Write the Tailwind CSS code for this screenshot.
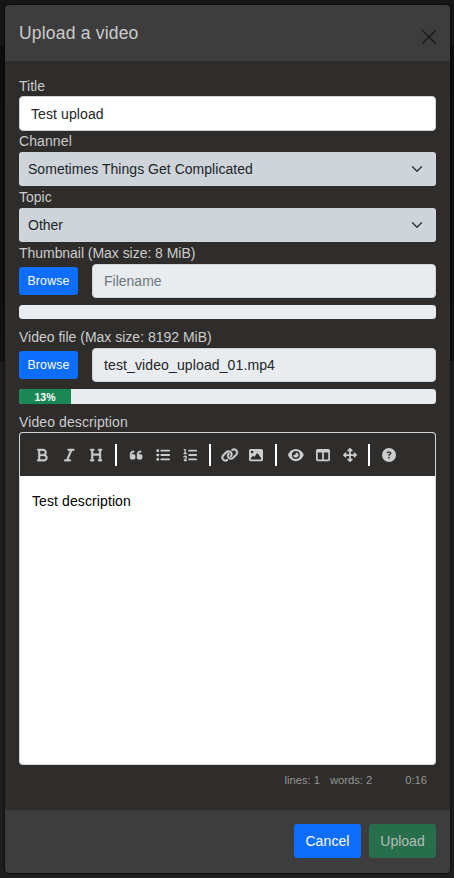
<!DOCTYPE html>
<html lang="en">
<head>
<meta charset="utf-8">
<title>Upload a video</title>
<script src="https://cdn.jsdelivr.net/npm/@tailwindcss/browser@4"></script>
</head>
<body class="h-[878px] w-[454px] overflow-hidden bg-[linear-gradient(#181617_0_46px,#0d0d0d_46px,#111111_361px,#1e1e1e_361px)] p-[5px] pr-1 font-['Liberation_Sans',Arial,sans-serif] text-sm leading-[21px] text-[#cccccc]">
<div class="flex h-[868px] flex-col overflow-hidden rounded-[4px] bg-[#3d3d3d] shadow-[0_0_3px_#000]">
  <header class="flex h-14 shrink-0 items-start justify-between pl-3.5 pr-[13px]">
    <h1 class="pt-[15px] text-[17.5px] leading-[26px] tracking-[0.2px]">Upload a video</h1>
    <svg class="mt-6 size-[16px]" viewBox="0 0 16 16" fill="none" stroke="#1c1c1c" stroke-width="1.5" stroke-linecap="round"><path d="M1.500 1.500 14.500 14.500M14.500 1.500 1.500 14.500"/></svg>
  </header>

  <main class="h-[749px] shrink-0 rounded-b-[3px] bg-[#2e2d2b] px-3.5 pt-3.5">
    <div class="h-14">
      <label class="block h-[21px] leading-[23px]">Title</label>
      <div class="h-[35px] rounded-[4px] border border-[#ced4da] bg-white px-[11px] py-[7px] leading-5 tracking-[0.1px] text-[#212529]">Test upload</div>
    </div>
    <div class="h-14">
      <label class="block h-[21px] tracking-[0.1px]">Channel</label>
      <div class="flex h-[34px] items-center justify-between rounded-[3px] bg-[#ced4da] pl-[9px] pr-[13px] tracking-[0.03px] text-[#212529]">Sometimes Things Get Complicated
        <svg class="size-3" viewBox="0 0 16 16" fill="none" stroke="#343a40" stroke-width="2" stroke-linecap="round" stroke-linejoin="round"><path d="m2 5 6 6 6-6"/></svg>
      </div>
    </div>
    <div class="h-14">
      <label class="block h-[21px]">Topic</label>
      <div class="flex h-[34px] items-center justify-between rounded-[3px] bg-[#ced4da] pl-[9px] pr-[13px] text-[#212529]">Other
        <svg class="size-3" viewBox="0 0 16 16" fill="none" stroke="#343a40" stroke-width="2" stroke-linecap="round" stroke-linejoin="round"><path d="m2 5 6 6 6-6"/></svg>
      </div>
    </div>
    <div class="h-21">
      <label class="block h-[21px] tracking-[-0.04px]">Thumbnail (Max size: 8 MiB)</label>
      <div class="flex h-[34px] items-center gap-3.5">
        <div class="h-7 w-[59px] rounded-[3px] bg-[#0d6efd] text-center text-[12.25px] leading-[28px] tracking-[0.2px] text-white">Browse</div>
        <div class="h-[34px] flex-1 rounded-[4px] border border-[#ced4da] bg-[#e9ecef] px-[11px] py-1.5 text-[#6c757d]">Filename</div>
      </div>
      <div class="mt-[7px] h-3.5 rounded-[3.500px] bg-[#e9ecef]"></div>
    </div>
    <div class="h-[85px]">
      <label class="block h-[21px]">Video file (Max size: 8192 MiB)</label>
      <div class="flex h-[34px] items-center gap-3.5">
        <div class="h-7 w-[59px] rounded-[3px] bg-[#0d6efd] text-center text-[12.25px] leading-[28px] tracking-[0.2px] text-white">Browse</div>
        <div class="h-[34px] flex-1 rounded-[4px] border border-[#ced4da] bg-[#e9ecef] px-[11px] py-1.5 tracking-[0.12px] text-[#212529]">test_video_upload_01.mp4</div>
      </div>
      <div class="mt-[7px] flex h-[15px] overflow-hidden rounded-[3.500px] bg-[#e9ecef]">
        <div class="w-[52px] bg-[#198754] text-center text-[10.5px] font-bold leading-[17px] text-white">13%</div>
      </div>
    </div>
    <label class="block h-5 tracking-[0.1px]">Video description</label>
    <div class="h-[333px] overflow-hidden rounded-[4px] border border-[#ced4da] border-b-[#d8dcdc] bg-white">
      <div class="flex h-[43px] items-center pl-[9px] pt-[1px] bg-[#2e2d2b] text-[#cccccc]">
        <span class="flex w-[27px] justify-center"><svg class="h-3.5 w-[10.5px] overflow-visible" viewBox="0 0 384 512" fill="currentColor" stroke="currentColor" stroke-width="14"><path d="M0 64C0 46.300 14.300 32 32 32H224c70.700 0 128 57.300 128 128c0 31.300-11.300 60.100-30 82.300c37.100 22.400 62 63.100 62 109.700c0 70.700-57.300 128-128 128H32c-17.700 0-32-14.300-32-32s14.300-32 32-32H48V96H32C14.300 96 0 81.700 0 64zM224 224c35.300 0 64-28.700 64-64s-28.700-64-64-64H112V224H224zM112 288V416H256c35.300 0 64-28.700 64-64s-28.700-64-64-64H112z"/></svg></span>
        <span class="flex w-[27px] justify-center"><svg class="h-3.5 w-[10.5px] overflow-visible" viewBox="0 0 384 512" fill="currentColor" stroke="currentColor" stroke-width="14"><path d="M128 64c0-17.700 14.300-32 32-32H352c17.700 0 32 14.300 32 32s-14.300 32-32 32H293.300L160 416h64c17.700 0 32 14.300 32 32s-14.300 32-32 32H32c-17.700 0-32-14.300-32-32s14.300-32 32-32H90.700L224 96H160c-17.700 0-32-14.300-32-32z"/></svg></span>
        <span class="flex w-[27px] justify-center"><svg class="h-3.5 w-[12.25px] overflow-visible" viewBox="0 0 448 512" fill="currentColor" stroke="currentColor" stroke-width="14"><path d="M0 64C0 46.300 14.300 32 32 32H128c17.700 0 32 14.300 32 32s-14.300 32-32 32H112V208H336V96H320c-17.700 0-32-14.300-32-32s14.300-32 32-32h96c17.700 0 32 14.300 32 32s-14.300 32-32 32H400V416h16c17.700 0 32 14.300 32 32s-14.300 32-32 32H320c-17.700 0-32-14.300-32-32s14.300-32 32-32h16V272H112V416h16c17.700 0 32 14.300 32 32s-14.300 32-32 32H32c-17.700 0-32-14.300-32-32s14.300-32 32-32H48V96H32C14.300 96 0 81.700 0 64z"/></svg></span>
        <i class="mx-[5.200px] h-[22px] w-0.5 bg-white"></i>
        <span class="flex w-[27px] justify-center"><svg class="h-3.5 w-[12.25px] overflow-visible" viewBox="0 0 448 512" fill="currentColor" stroke="currentColor" stroke-width="10"><path d="M0 216C0 149.700 53.700 96 120 96h8c17.700 0 32 14.300 32 32s-14.300 32-32 32h-8c-30.900 0-56 25.100-56 56v8h64c35.300 0 64 28.700 64 64v64c0 35.300-28.700 64-64 64H64c-35.300 0-64-28.700-64-64V216zm256 0c0-66.300 53.700-120 120-120h8c17.700 0 32 14.300 32 32s-14.300 32-32 32h-8c-30.900 0-56 25.100-56 56v8h64c35.300 0 64 28.700 64 64v64c0 35.300-28.700 64-64 64H320c-35.300 0-64-28.700-64-64V216z"/></svg></span>
        <span class="flex w-[27px] justify-center"><svg class="size-3.5" viewBox="0 0 512 512" fill="currentColor"><rect x="16" y="48" width="96" height="96" rx="24"/><rect x="16" y="208" width="96" height="96" rx="24"/><rect x="16" y="368" width="96" height="96" rx="24"/><rect x="160" y="60" width="352" height="72" rx="32"/><rect x="160" y="220" width="352" height="72" rx="32"/><rect x="160" y="380" width="352" height="72" rx="32"/></svg></span>
        <span class="flex w-[27px] justify-center"><svg class="size-3.5" viewBox="0 0 512 512" fill="currentColor"><path d="M24 56c0-13.300 10.700-24 24-24H80c13.300 0 24 10.700 24 24V176h16c13.300 0 24 10.700 24 24s-10.700 24-24 24H40c-13.300 0-24-10.700-24-24s10.700-24 24-24H56V80H48C34.700 80 24 69.300 24 56z"/><path d="M34 326C61 282 124 285 124 337C124 375 70 407 48 456H122" fill="none" stroke="currentColor" stroke-width="50" stroke-linecap="round" stroke-linejoin="round"/><rect x="192" y="60" width="320" height="72" rx="32"/><rect x="192" y="220" width="320" height="72" rx="32"/><rect x="192" y="380" width="320" height="72" rx="32"/></svg></span>
        <i class="mx-[5.200px] h-[22px] w-0.5 bg-white"></i>
        <span class="flex w-[27px] justify-center"><svg class="h-3.5 w-[17.5px] overflow-visible" viewBox="0 0 640 512" fill="currentColor" stroke="currentColor" stroke-width="14"><path d="M579.800 267.700c56.500-56.500 56.500-148 0-204.500c-50-50-128.800-56.500-186.300-15.400l-1.600 1.100c-14.400 10.300-17.700 30.300-7.400 44.600s30.300 17.700 44.600 7.400l1.600-1.100c32.100-22.900 76-19.300 103.800 8.600c31.500 31.500 31.500 82.500 0 114L422.300 334.800c-31.500 31.500-82.500 31.500-114 0c-27.900-27.900-31.500-71.800-8.600-103.800l1.100-1.600c10.300-14.400 6.900-34.400-7.400-44.600s-34.400-6.900-44.600 7.400l-1.100 1.600C206.500 251.200 213 330 263 380c56.500 56.500 148 56.500 204.500 0L579.800 267.700zM60.200 244.300c-56.500 56.500-56.500 148 0 204.500c50 50 128.800 56.500 186.300 15.400l1.600-1.100c14.400-10.300 17.700-30.300 7.400-44.600s-30.300-17.700-44.600-7.400l-1.600 1.100c-32.100 22.900-76 19.300-103.800-8.600C74 372 74 321 105.500 289.500L217.700 177.200c31.500-31.500 82.500-31.500 114 0c27.900 27.900 31.500 71.800 8.600 103.900l-1.100 1.600c-10.300 14.400-6.900 34.400 7.400 44.600s34.400 6.900 44.600-7.400l1.100-1.600C433.500 260.800 427 182 377 132c-56.500-56.500-148-56.500-204.500 0L60.200 244.300z"/></svg></span>
        <span class="flex w-[27px] justify-center"><svg class="size-3.5" viewBox="0 0 512 512" fill="currentColor" fill-rule="evenodd"><path d="M0 96C0 60.700 28.700 32 64 32H448c35.300 0 64 28.700 64 64V416c0 35.300-28.700 64-64 64H64c-35.300 0-64-28.700-64-64V96zM323.800 202.500c-4.500-6.600-11.900-10.500-19.800-10.500s-15.400 3.900-19.800 10.500l-87 127.600L170.700 297c-4.600-5.700-11.500-9-18.700-9s-14.200 3.300-18.700 9l-64 80c-5.800 7.200-6.900 17.100-2.900 25.400s12.400 13.600 21.600 13.600H424c8.900 0 17.100-4.900 21.200-12.800s3.600-17.400-1.400-24.700l-120-176zM112 192a48 48 0 1 0 0-96 48 48 0 1 0 0 96z"/></svg></span>
        <i class="mx-[5.200px] h-[22px] w-0.5 bg-white"></i>
        <span class="flex w-[27px] justify-center"><svg class="h-3.5 w-[15.75px]" viewBox="0 0 576 512" fill="currentColor" fill-rule="evenodd"><path d="M288 32c-80.800 0-145.500 36.800-192.600 80.600C48.600 156 17.300 208 2.500 243.700c-3.300 7.900-3.300 16.700 0 24.600C17.300 304 48.600 356 95.400 399.400C142.500 443.200 207.200 480 288 480s145.500-36.800 192.600-80.600c46.800-43.500 78.100-95.400 93-131.100c3.300-7.900 3.300-16.700 0-24.600c-14.900-35.700-46.200-87.700-93-131.100C433.500 68.800 368.800 32 288 32zM144 256a144 144 0 1 1 288 0 144 144 0 1 1-288 0zm144-64c0 35.300-28.700 64-64 64c-7.100 0-13.900-1.200-20.300-3.300c-5.500-1.800-11.900 1.600-11.700 7.400c.3 6.900 1.300 13.800 3.200 20.700c13.700 51.200 66.400 81.600 117.600 67.900s81.600-66.400 67.900-117.600c-11.100-41.500-47.800-69.400-88.600-71.100c-5.800-.2-9.200 6.100-7.400 11.700c2.100 6.400 3.300 13.200 3.300 20.300z"/></svg></span>
        <span class="flex w-[27px] justify-center"><svg class="size-3.5" viewBox="0 0 512 512" fill="currentColor" fill-rule="evenodd"><path d="M0 96C0 60.700 28.700 32 64 32H448c35.300 0 64 28.700 64 64V416c0 35.300-28.700 64-64 64H64c-35.300 0-64-28.700-64-64V96zm64 64V416H224V160H64zm384 0H288V416H448V160z"/></svg></span>
        <span class="flex w-[27px] justify-center"><svg class="size-3.5" viewBox="0 0 512 512" fill="none" stroke="currentColor" stroke-width="64" stroke-linecap="round" stroke-linejoin="round"><path d="M256 40V472M40 256H472M192 96l64-64 64 64M192 416l64 64 64-64M96 192l-64 64 64 64M416 192l64 64-64 64"/></svg></span>
        <i class="mx-[5.200px] h-[22px] w-0.5 bg-white"></i>
        <span class="flex w-[27px] justify-center"><svg class="size-3.5" viewBox="0 0 512 512" fill="currentColor" fill-rule="evenodd"><path d="M256 512A256 256 0 1 0 256 0a256 256 0 1 0 0 512zM169.800 165.300c7.900-22.300 29.100-37.300 52.800-37.300h58.300c34.900 0 63.100 28.300 63.100 63.100c0 22.600-12.100 43.500-31.700 54.800L280 264.400c-.2 13-10.900 23.600-24 23.600c-13.300 0-24-10.700-24-24V250.500c0-8.600 4.600-16.500 12.100-20.800l44.300-25.400c4.700-2.700 7.600-7.700 7.600-13.100c0-8.400-6.800-15.100-15.100-15.100H222.600c-3.400 0-6.400 2.100-7.500 5.300l-.4 1.200c-4.400 12.500-18.200 19-30.600 14.600s-19-18.200-14.600-30.600l.4-1.200zM224 352a32 32 0 1 1 64 0 32 32 0 1 1-64 0z"/></svg></span>
      </div>
      <div class="px-3 pt-[15px] tracking-[0.1px] text-black">Test description</div>
    </div>
    <div class="flex justify-end pr-[9px] pt-[5px] text-[11.2px] leading-5 text-[#959694]">
      <span>lines: 1</span><span class="ml-[10px]">words: 2</span><span class="ml-[33px]">0:16</span>
    </div>
  </main>

  <footer class="flex justify-end gap-2 px-3.5 pt-3.5">
    <div class="h-[34px] w-[67px] rounded-[3px] bg-[#0d6efd] text-center leading-[34px] tracking-[0.1px] text-white">Cancel</div>
    <div class="h-[34px] w-[67px] rounded-[3px] bg-[#276e4c] text-center leading-[34px] text-[#b4bdb8]">Upload</div>
  </footer>
</div>
</body>
</html>
